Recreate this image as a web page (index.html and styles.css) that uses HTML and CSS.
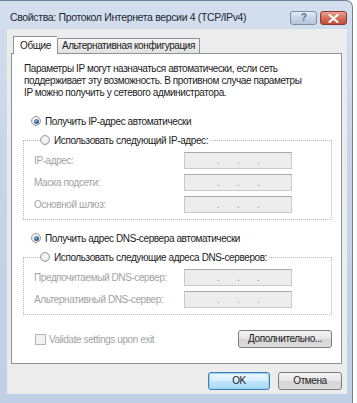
FILE: index.html
```html
<!DOCTYPE html>
<html lang="ru">
<head>
    <meta charset="UTF-8">
    <title>Свойства: Протокол Интернета версии 4 (TCP/IPv4)</title>
    <link rel="stylesheet" href="styles.css">
</head>
<body>
    <div class="window">
        <div class="titlebar">
            <span class="title">Свойства: Протокол Интернета версии 4 (TCP/IPv4)</span>
            <div class="caption-buttons">
                <button class="caption help">?</button>
                <button class="caption close">
                    <svg width="11" height="9" viewBox="0 0 11 9">
                        <path d="M1.5 1 L9.5 8 M9.5 1 L1.5 8" stroke="#fff" stroke-width="2.2" stroke-linecap="round"/>
                    </svg>
                </button>
            </div>
        </div>

        <div class="client">
            <div class="tabs">
                <div class="tab active">Общие</div>
                <div class="tab">Альтернативная конфигурация</div>
            </div>

            <div class="panel">
                <p class="intro">Параметры IP могут назначаться автоматически, если сеть поддерживает эту возможность. В противном случае параметры IP можно получить у сетевого администратора.</p>

                <label class="radio-row first">
                    <span class="radio checked"></span>
                    Получить IP-адрес автоматически
                </label>

                <fieldset class="group">
                    <legend>
                        <label class="radio-row">
                            <span class="radio"></span>
                            Использовать следующий IP-адрес:
                        </label>
                    </legend>
                    <div class="field">
                        <span class="field-label">IP-адрес:</span>
                        <div class="ip-box"><span></span><i>.</i><span></span><i>.</i><span></span><i>.</i><span></span></div>
                    </div>
                    <div class="field">
                        <span class="field-label">Маска подсети:</span>
                        <div class="ip-box"><span></span><i>.</i><span></span><i>.</i><span></span><i>.</i><span></span></div>
                    </div>
                    <div class="field">
                        <span class="field-label">Основной шлюз:</span>
                        <div class="ip-box"><span></span><i>.</i><span></span><i>.</i><span></span><i>.</i><span></span></div>
                    </div>
                </fieldset>

                <label class="radio-row dns-auto">
                    <span class="radio checked"></span>
                    Получить адрес DNS-сервера автоматически
                </label>

                <fieldset class="group">
                    <legend>
                        <label class="radio-row">
                            <span class="radio"></span>
                            Использовать следующие адреса DNS-серверов:
                        </label>
                    </legend>
                    <div class="field">
                        <span class="field-label">Предпочитаемый DNS-сервер:</span>
                        <div class="ip-box"><span></span><i>.</i><span></span><i>.</i><span></span><i>.</i><span></span></div>
                    </div>
                    <div class="field">
                        <span class="field-label">Альтернативный DNS-сервер:</span>
                        <div class="ip-box"><span></span><i>.</i><span></span><i>.</i><span></span><i>.</i><span></span></div>
                    </div>
                </fieldset>

                <div class="panel-bottom">
                    <label class="check-row">
                        <span class="checkbox"></span>
                        Validate settings upon exit
                    </label>
                    <button class="btn advanced">Дополнительно...</button>
                </div>
            </div>

            <div class="dialog-buttons">
                <button class="btn default ok">OK</button>
                <button class="btn cancel">Отмена</button>
            </div>
        </div>
    </div>
</body>
</html>
```

FILE: styles.css
```css
:root {
    --frame: #c6d5e7;
    --frame-dark: #6f829b;
    --face: #ececec;
    --text: #1b1b1b;
    --disabled: #a2a2a2;
    --border: #8e9299;
}

* {
    box-sizing: border-box;
    margin: 0;
    padding: 0;
}

body {
    background: #ffffff;
    font-family: "Liberation Sans", Arial, sans-serif;
    font-size: 10px;
    letter-spacing: -0.4px;
    color: var(--text);
}

button {
    font-family: inherit;
    font-size: inherit;
    letter-spacing: inherit;
    color: inherit;
}

.window {
    width: 353px;
    height: 403px;
    display: flex;
    flex-direction: column;
    background: linear-gradient(180deg, #d3dfee 0%, var(--frame) 40%, #bfd0e6 100%);
    border: 1px solid var(--frame-dark);
    border-bottom: none;
    border-left: none;
    border-radius: 0 7px 0 0;
    padding: 0 5px 0 7px;
}

.titlebar {
    height: 28px;
    display: flex;
    justify-content: space-between;
    align-items: flex-start;
    padding: 9px 0 0 3px;
}

.title {
    font-size: 10.5px;
    letter-spacing: -0.35px;
    line-height: 15px;
    color: #1e2633;
}

.caption-buttons {
    display: flex;
    gap: 3px;
    margin-top: 1px;
}

.caption {
    width: 27px;
    height: 14px;
    border: 1px solid #7d8ea5;
    border-radius: 3px;
    display: flex;
    align-items: center;
    justify-content: center;
    font-weight: bold;
    font-size: 10px;
    line-height: 1;
}

.caption.help {
    background: linear-gradient(180deg, #e4ecf6 0%, #c5d3e5 50%, #b4c6dc 100%);
    color: #5c6f8a;
}

.caption.close {
    background: linear-gradient(180deg, #e9a593 0%, #d2705c 50%, #c24a36 100%);
    border-color: #8b3a32;
}

.client {
    flex: 1;
    background: var(--face);
    padding: 7px 5px 0 4px;
    margin-bottom: 9px;
    display: flex;
    flex-direction: column;
}

.tabs {
    display: flex;
    align-items: flex-end;
    margin-left: 2px;
    height: 17px;
    position: relative;
    z-index: 1;
}

.tab {
    height: 15px;
    padding: 0 4px;
    border: 1px solid var(--border);
    border-bottom: none;
    background: linear-gradient(180deg, #f4f4f4 0%, #e2e2e2 100%);
    line-height: 14px;
}

.tab.active {
    height: 18px;
    margin-bottom: -1px;
    padding: 0 6px;
    background: #ffffff;
    line-height: 17px;
    border-right: none;
}

.panel {
    width: 331px;
    height: 311px;
    background: #ffffff;
    border: 1px solid var(--border);
    padding: 9px 9px 0 11px;
    display: flex;
    flex-direction: column;
}

.intro {
    padding-left: 1px;
    line-height: 12px;
    width: 284px;
}

.radio-row {
    display: flex;
    align-items: center;
    gap: 4px;
    height: 16px;
    white-space: nowrap;
}

.radio-row.first {
    margin: 14px 0 0 8px;
}

.radio-row.dns-auto {
    margin: 10px 0 0 8px;
}

.radio {
    width: 10px;
    height: 10px;
    border-radius: 50%;
    border: 1px solid #9a9a9a;
    background: radial-gradient(circle at 50% 40%, #ffffff 0%, #e6e6e6 70%);
    display: flex;
    align-items: center;
    justify-content: center;
}

.radio.checked::after {
    content: "";
    width: 5px;
    height: 5px;
    border-radius: 50%;
    background: radial-gradient(circle at 40% 35%, #8fb2d6 0%, #2b5d92 60%, #163d66 100%);
}

.group {
    margin-top: 3px;
    border: 1px dotted #b9b9b9;
    padding: 4px 10px 6px 10px;
    display: flex;
    flex-direction: column;
    gap: 5px;
}

.group legend {
    padding: 0 2px 0 0;
    margin-left: 6px;
}

.field {
    display: flex;
    align-items: center;
    height: 17px;
    color: var(--disabled);
    white-space: nowrap;
}

.field-label {
    width: 150px;
}

.ip-box {
    width: 108px;
    height: 17px;
    border: 1px solid #c9c9c9;
    border-top-color: #a9a9a9;
    background: #ededed;
    display: flex;
    align-items: center;
    padding: 0 14px 0 14px;
}

.ip-box span {
    flex: 1;
}

.ip-box i {
    font-style: normal;
    color: #8f8f9c;
    line-height: 1;
}

.panel-bottom {
    margin-top: 15px;
    display: flex;
    justify-content: space-between;
    align-items: center;
    padding-left: 12px;
}

.check-row {
    display: flex;
    align-items: center;
    gap: 3px;
    color: var(--disabled);
}

.checkbox {
    width: 11px;
    height: 11px;
    border: 1px solid #b5b5b5;
    background: #f2f2f2;
}

.btn {
    height: 18px;
    border: 1px solid #7d7d7d;
    border-radius: 3px;
    background: linear-gradient(180deg, #f4f4f4 0%, #e6e6e6 48%, #d6d6d6 52%, #dcdcdc 100%);
    line-height: 16px;
    padding: 0;
}

.btn.advanced {
    width: 94px;
}

.dialog-buttons {
    margin-top: 8px;
    display: flex;
    justify-content: flex-end;
    gap: 8px;
}

.btn.ok {
    width: 62px;
}

.btn.default {
    border-color: #3c7fb1;
    background: linear-gradient(180deg, #eaf6fd 0%, #d9f0fc 48%, #bee6fd 52%, #a7d9f5 100%);
    box-shadow: inset 0 0 0 1px #9ad4f5;
}

.btn.cancel {
    width: 64px;
}
```
